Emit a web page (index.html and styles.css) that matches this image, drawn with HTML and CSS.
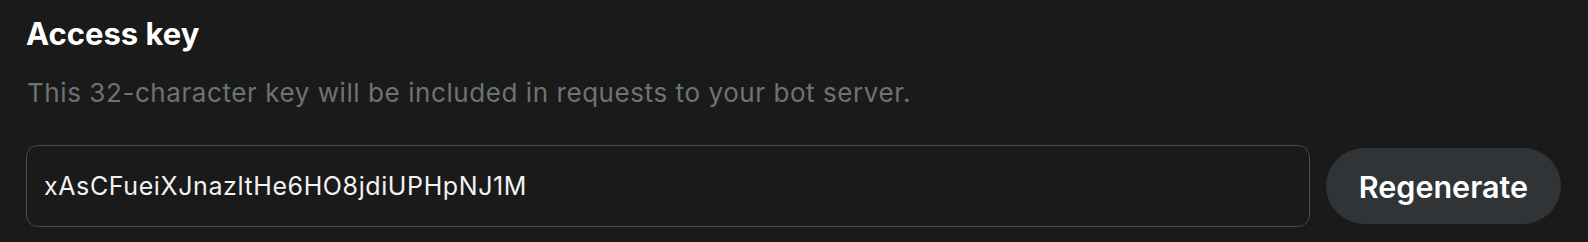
FILE: index.html
```html
<!DOCTYPE html>
<html>
<head>
<meta charset="utf-8">
<link rel="stylesheet" href="styles.css">
</head>
<body>
<section class="panel">
  <h2 class="title">Access key</h2>
  <p class="desc">This 32-character key will be included in requests to your bot server.</p>
  <div class="row">
    <div class="field">xAsCFueiXJnazltHe6HO8jdiUPHpNJ1M</div>
    <button class="btn">Regenerate</button>
  </div>
</section>
</body>
</html>
```

FILE: styles.css
```css
html, body {
  margin: 0;
  padding: 0;
  background: #1a1a1a;
}
body {
  font-family: Inter, "Noto Sans", sans-serif;
  width: 1588px;
  height: 242px;
  overflow: hidden;
}
.panel {
  padding: 14px 27px 0 26px;
}
.title {
  margin: 0;
  font-size: 31px;
  font-weight: 700;
  line-height: 40px;
  color: #ffffff;
}
.desc {
  margin: 23px 0 0 1px;
  font-size: 26px;
  line-height: 32px;
  letter-spacing: 0.57px;
  color: #6c7473;
}
.row {
  margin-top: 36px;
  display: flex;
  align-items: center;
  gap: 16px;
}
.field {
  flex: 1;
  box-sizing: border-box;
  height: 82px;
  border: 1px solid #474c4c;
  border-radius: 12px;
  padding: 0 17px;
  display: flex;
  align-items: center;
  font-size: 25px;
  letter-spacing: 0.6px;
  color: #f2f2f2;
}
.btn {
  box-sizing: border-box;
  height: 76px;
  padding: 0 33px;
  border: none;
  border-radius: 38px;
  background: #303436;
  color: #ffffff;
  font-family: Inter, "Noto Sans", sans-serif;
  font-size: 30.5px;
  font-weight: 600;
}
```
